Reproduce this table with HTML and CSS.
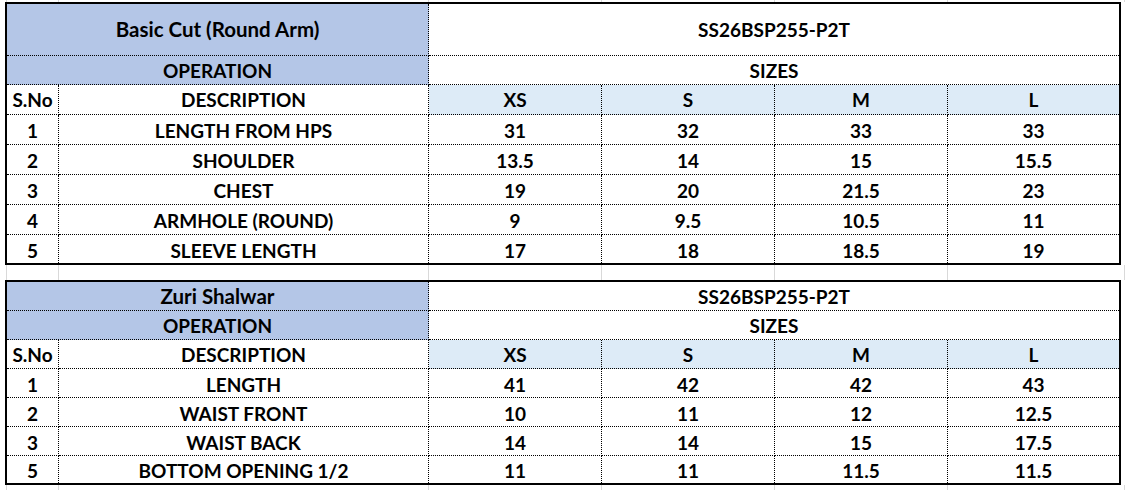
FILE: index.html
```html
<!DOCTYPE html>
<html lang="en">
<head>
<meta charset="utf-8">
<title>Size Chart</title>
<link rel="stylesheet" href="styles.css">
</head>
<body>
<div class="sheet">
  <div class="gridstrip strip-top"><span></span><span></span><span></span><span></span><span></span><span></span><span></span></div>

  <table class="spec">
    <colgroup>
      <col class="c-sno"><col class="c-desc"><col class="c-size"><col class="c-size"><col class="c-size"><col class="c-last">
    </colgroup>
    <tr class="r-title1">
      <td colspan="2" class="blue title">Basic Cut (Round Arm)</td>
      <td colspan="4" class="nr">SS26BSP255-P2T</td>
    </tr>
    <tr class="r-29">
      <td colspan="2" class="blue">OPERATION</td>
      <td colspan="4" class="nr">SIZES</td>
    </tr>
    <tr class="r-30">
      <td>S.No</td><td>DESCRIPTION</td>
      <td class="lb">XS</td><td class="lb">S</td><td class="lb">M</td><td class="lb nr">L</td>
    </tr>
    <tr class="r-30 data"><td>1</td><td>LENGTH FROM HPS</td><td>31</td><td>32</td><td>33</td><td class="nr">33</td></tr>
    <tr class="r-30 data"><td>2</td><td>SHOULDER</td><td>13.5</td><td>14</td><td>15</td><td class="nr">15.5</td></tr>
    <tr class="r-30 data"><td>3</td><td>CHEST</td><td>19</td><td>20</td><td>21.5</td><td class="nr">23</td></tr>
    <tr class="r-30 data"><td>4</td><td>ARMHOLE (ROUND)</td><td>9</td><td>9.5</td><td>10.5</td><td class="nr">11</td></tr>
    <tr class="r-28 data last"><td>5</td><td>SLEEVE LENGTH</td><td>17</td><td>18</td><td>18.5</td><td class="nr">19</td></tr>
  </table>

  <div class="gridstrip strip-gap"><span></span><span></span><span></span><span></span><span></span><span></span><span></span></div>

  <table class="spec">
    <colgroup>
      <col class="c-sno"><col class="c-desc"><col class="c-size"><col class="c-size"><col class="c-size"><col class="c-last">
    </colgroup>
    <tr class="r-29">
      <td colspan="2" class="blue title">Zuri Shalwar</td>
      <td colspan="4" class="nr">SS26BSP255-P2T</td>
    </tr>
    <tr class="r-29">
      <td colspan="2" class="blue">OPERATION</td>
      <td colspan="4" class="nr">SIZES</td>
    </tr>
    <tr class="r-29">
      <td>S.No</td><td>DESCRIPTION</td>
      <td class="lb">XS</td><td class="lb">S</td><td class="lb">M</td><td class="lb nr">L</td>
    </tr>
    <tr class="r-29 data"><td>1</td><td>LENGTH</td><td>41</td><td>42</td><td>42</td><td class="nr">43</td></tr>
    <tr class="r-29 data"><td>2</td><td>WAIST FRONT</td><td>10</td><td>11</td><td>12</td><td class="nr">12.5</td></tr>
    <tr class="r-29 data"><td>3</td><td>WAIST BACK</td><td>14</td><td>14</td><td>15</td><td class="nr">17.5</td></tr>
    <tr class="r-27 data last"><td>5</td><td>BOTTOM OPENING 1/2</td><td>11</td><td>11</td><td>11.5</td><td class="nr">11.5</td></tr>
  </table>

  <div class="gridstrip strip-bottom"><span></span><span></span><span></span><span></span><span></span><span></span><span></span></div>
</div>
</body>
</html>
```

FILE: styles.css
```css
* { box-sizing: border-box; }

html, body {
  margin: 0;
  padding: 0;
  background: #ffffff;
}

body {
  font-family: "Lato", "Liberation Sans", sans-serif;
  font-weight: 700;
  font-size: 19px;
  color: #000000;
}

.sheet {
  width: 1125px;
}

.gridstrip {
  display: flex;
}
.gridstrip span {
  border-right: 1px solid #d9d9d9;
  flex: none;
}
.gridstrip span:nth-child(1) { width: 7px; }
.gridstrip span:nth-child(2) { width: 52px; }
.gridstrip span:nth-child(3) { width: 370px; }
.gridstrip span:nth-child(4),
.gridstrip span:nth-child(5),
.gridstrip span:nth-child(6) { width: 173px; }
.gridstrip span:nth-child(7) { width: 177px; }

.strip-top { height: 2px; }
.strip-gap { height: 15px; }
.strip-bottom { height: 5px; }

.spec {
  margin-left: 5px;
  border-collapse: separate;
  border-spacing: 0;
  table-layout: fixed;
  width: 1116px;
  border: 2px solid #000000;
}

.c-sno { width: 52px; }
.c-desc { width: 370px; }
.c-size { width: 173px; }
.c-last { width: 171px; }

.spec td {
  padding: 0;
  text-align: center;
  vertical-align: middle;
  line-height: 1;
  white-space: nowrap;
  border-right: 1px dotted #000000;
  border-bottom: 1px dotted #000000;
}

.spec td.nr { border-right: none; }
.spec tr.last td { border-bottom: none; }

.spec tr.data td { padding-top: 2px; }

.spec td.title { font-size: 20.5px; }

.r-title1 td { height: 52px; }
.r-30 td { height: 30px; }
.r-29 td { height: 29px; }
.r-28 td { height: 28px; }
.r-27 td { height: 27px; }

.blue { background: #b4c6e7; }
.lb { background: #ddebf7; }
```
